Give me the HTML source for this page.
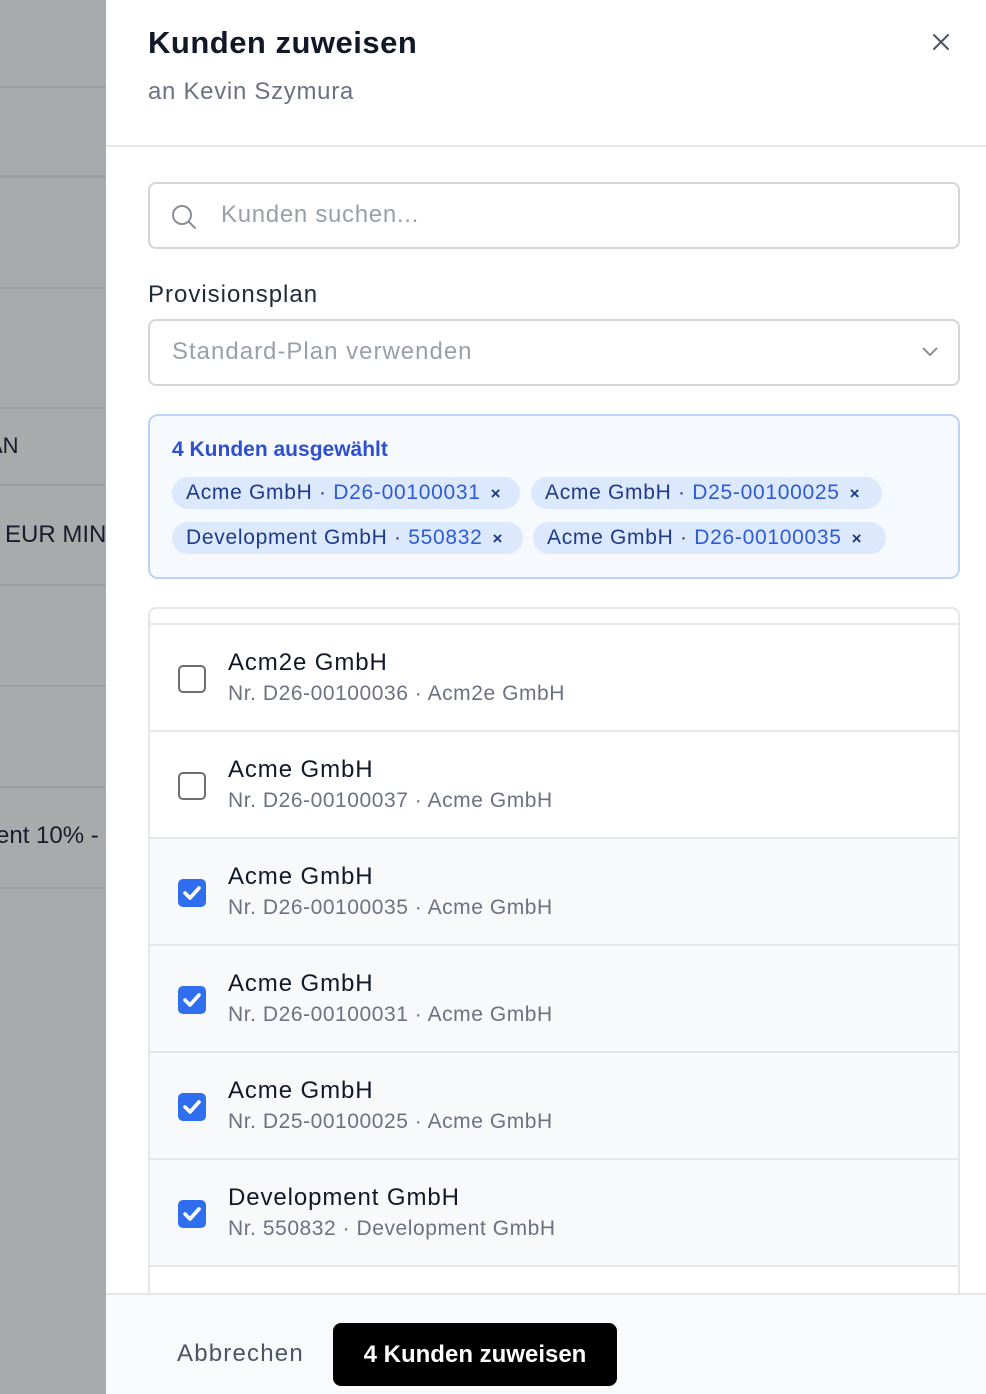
<!DOCTYPE html>
<html><head><meta charset="utf-8"><style>
*{box-sizing:border-box;margin:0;padding:0}
body{width:986px;height:1394px;overflow:hidden;position:relative;font-family:"Liberation Sans",sans-serif;background:#fff}
.ov{position:absolute;left:0;top:0;width:106px;height:1394px;background:#a9aaab;overflow:hidden}
.ov .l{position:absolute;left:0;width:106px;height:2px;background:#9d9ea0}
.ov .t{position:absolute;font-size:24px;color:#1c1b2e;white-space:nowrap}
.panel{position:absolute;left:106px;top:0;width:880px;height:1394px;background:#fff}
.abs{position:absolute;white-space:nowrap}
.chip{position:absolute;height:32px;border-radius:16px;background:#dce8fc;font-size:21px;line-height:32px;padding-left:14px;white-space:nowrap;color:#1e3a8a;letter-spacing:0.7px}
.chip b{font-weight:normal;color:#2d5bd8}
.chip i{font-style:normal;font-weight:bold;font-size:17px;margin-left:10px;color:#1e3a8a}
.row{position:absolute;left:150px;width:808px;height:107px;border-bottom:2px solid #e6e7ea}
.row.sel{background:#f8f9fb}
.cb{position:absolute;left:28px;top:40px;width:28px;height:28px;border:2px solid #6b6e75;border-radius:5px;background:#fff}
.sel .cb{border:none;background:#2f6fef}
.row .n{position:absolute;left:78px;top:24px;font-size:24px;color:#111827;letter-spacing:0.9px}
.row .s{position:absolute;left:78px;top:57px;font-size:21px;color:#6b7280;letter-spacing:0.55px}
</style></head><body>
<div class="ov">
<div class="l" style="top:86px"></div>
<div class="l" style="top:175px;height:3px"></div>
<div class="l" style="top:287px"></div>
<div class="l" style="top:407px"></div>
<div class="l" style="top:484px"></div>
<div class="l" style="top:584px"></div>
<div class="l" style="top:685px"></div>
<div class="l" style="top:786px"></div>
<div class="l" style="top:887px"></div>
<div class="t" style="left:-12px;top:433px;font-size:22px">AN</div>
<div class="t" style="left:5px;top:521px">EUR MIN</div>
<div class="t" style="left:-4px;top:822px">ent 10% -</div>
</div>
<div class="panel"></div>
<div class="abs" style="left:148px;top:25px;font-size:31px;font-weight:bold;color:#111827;letter-spacing:0.5px">Kunden zuweisen</div>
<div class="abs" style="left:148px;top:78px;font-size:24px;color:#6b7280;letter-spacing:0.7px">an Kevin Szymura</div>
<svg class="abs" style="left:930px;top:31px" width="22" height="22" viewBox="0 0 22 22"><path d="M4 4L18 18M18 4L4 18" stroke="#4b5563" stroke-width="2" stroke-linecap="round"/></svg>
<div class="abs" style="left:106px;top:145px;width:880px;height:2px;background:#e8e9ec"></div>
<div class="abs" style="left:148px;top:182px;width:812px;height:67px;border:2px solid #d4d6da;border-radius:8px"></div>
<svg class="abs" style="left:170px;top:203px" width="28" height="28" viewBox="0 0 28 28"><circle cx="12" cy="12" r="9" fill="none" stroke="#8b8f97" stroke-width="2"/><path d="M19 19L25 25" stroke="#8b8f97" stroke-width="2" stroke-linecap="round"/></svg>
<div class="abs" style="left:221px;top:201px;font-size:24px;color:#9aa0a8;letter-spacing:0.7px">Kunden suchen...</div>
<div class="abs" style="left:148px;top:281px;font-size:24px;color:#1f2937;letter-spacing:1px">Provisionsplan</div>
<div class="abs" style="left:148px;top:319px;width:812px;height:67px;border:2px solid #d4d6da;border-radius:8px"></div>
<div class="abs" style="left:172px;top:338px;font-size:24px;color:#9aa0a8;letter-spacing:1px">Standard-Plan verwenden</div>
<svg class="abs" style="left:920px;top:344px" width="20" height="14" viewBox="0 0 20 14"><path d="M3 4L10 11L17 4" fill="none" stroke="#8b8f97" stroke-width="2"/></svg>
<div class="abs" style="left:148px;top:414px;width:812px;height:165px;border:2px solid #bcd3f7;border-radius:10px;background:#f6f9fe"></div>
<div class="abs" style="left:172px;top:438px;font-size:21px;font-weight:bold;color:#2d4fd0">4 Kunden ausgewählt</div>
<div class="chip" style="left:172px;top:477px;width:348px">Acme GmbH · <b>D26-00100031</b><i>×</i></div>
<div class="chip" style="left:531px;top:477px;width:351px">Acme GmbH · <b>D25-00100025</b><i>×</i></div>
<div class="chip" style="left:172px;top:522px;width:351px">Development GmbH · <b>550832</b><i>×</i></div>
<div class="chip" style="left:533px;top:522px;width:353px">Acme GmbH · <b>D26-00100035</b><i>×</i></div>
<div class="abs" style="left:148px;top:607px;width:812px;height:700px;border:2px solid #e6e7ea;border-radius:8px"></div>
<div class="abs" style="left:150px;top:623px;width:808px;height:2px;background:#e6e7ea"></div>
<div class="row" style="top:625px"><div class="cb"></div><div class="n">Acm2e GmbH</div><div class="s">Nr. D26-00100036 · Acm2e GmbH</div></div>
<div class="row" style="top:732px"><div class="cb"></div><div class="n">Acme GmbH</div><div class="s">Nr. D26-00100037 · Acme GmbH</div></div>
<div class="row sel" style="top:839px"><div class="cb"><svg width="28" height="28" viewBox="0 0 28 28"><path d="M7 14L12 19L21 9" fill="none" stroke="#fff" stroke-width="3.6" stroke-linecap="round" stroke-linejoin="round"/></svg></div><div class="n">Acme GmbH</div><div class="s">Nr. D26-00100035 · Acme GmbH</div></div>
<div class="row sel" style="top:946px"><div class="cb"><svg width="28" height="28" viewBox="0 0 28 28"><path d="M7 14L12 19L21 9" fill="none" stroke="#fff" stroke-width="3.6" stroke-linecap="round" stroke-linejoin="round"/></svg></div><div class="n">Acme GmbH</div><div class="s">Nr. D26-00100031 · Acme GmbH</div></div>
<div class="row sel" style="top:1053px"><div class="cb"><svg width="28" height="28" viewBox="0 0 28 28"><path d="M7 14L12 19L21 9" fill="none" stroke="#fff" stroke-width="3.6" stroke-linecap="round" stroke-linejoin="round"/></svg></div><div class="n">Acme GmbH</div><div class="s">Nr. D25-00100025 · Acme GmbH</div></div>
<div class="row sel" style="top:1160px"><div class="cb"><svg width="28" height="28" viewBox="0 0 28 28"><path d="M7 14L12 19L21 9" fill="none" stroke="#fff" stroke-width="3.6" stroke-linecap="round" stroke-linejoin="round"/></svg></div><div class="n">Development GmbH</div><div class="s">Nr. 550832 · Development GmbH</div></div>
<div class="abs" style="left:106px;top:1293px;width:880px;height:101px;background:#f9fafb;border-top:2px solid #e6e7ea"></div>
<div class="abs" style="left:177px;top:1340px;font-size:24px;color:#4b5563;letter-spacing:1.2px">Abbrechen</div>
<div class="abs" style="left:333px;top:1323px;width:284px;height:63px;background:#000;border-radius:8px;color:#fff;font-size:24px;font-weight:bold;text-align:center;line-height:63px">4 Kunden zuweisen</div>
</body></html>
